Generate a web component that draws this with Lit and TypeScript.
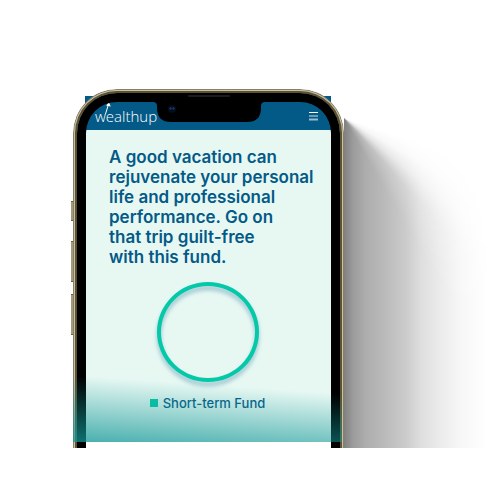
import { LitElement, html, css } from "lit";
import { customElement } from "lit/decorators.js";

@customElement("app-root")
export class AppRoot extends LitElement {
  static styles = css`
    :host {
      display: block;
      min-height: 100vh;
      background: #fff;
      color: #045a87;
      font-family: Inter, "Open Sans", sans-serif;
    }
    .scene {
      display: grid;
      grid-template-columns: 73fr 271fr 154fr;
      padding-top: 89px;
    }
    .phone {
      grid-column: 2;
      position: relative;
      padding: 7px 13px 6px 12px;
    }
    .bar {
      display: flex;
      align-items: center;
      justify-content: space-between;
      height: 34px;
      box-sizing: border-box;
      padding: 6px 13px 0 10px;
      background: #045a87;
    }
    .logo {
      display: block;
      color: #fff;
      text-decoration: none;
      font: 300 15px/20px "Open Sans", sans-serif;
      position: relative;
    }
    .arrow {
      position: absolute;
      left: 9px;
      top: -4px;
      width: 8px;
      height: 12px;
    }
    .menu {
      display: flex;
      padding: 0;
      border: 0;
      background: none;
    }
    .content {
      display: flex;
      flex-direction: column;
      align-items: center;
      margin-left: 1px;
      height: 312px;
      box-sizing: border-box;
      padding: 17px 2px 0 0;
      background: #e7f8f3;
    }
    h1 {
      align-self: stretch;
      margin: 0 0 15px;
      padding-left: 23px;
      font-size: 17px;
      line-height: 20px;
      font-weight: 600;
      white-space: nowrap;
    }
    .ring {
      width: 102px;
      height: 100px;
      box-sizing: border-box;
      border: 4px solid #04c9a8;
      border-radius: 50%;
      filter: drop-shadow(0 4px 2px rgba(4, 90, 135, 0.35));
    }
    .legend {
      display: flex;
      align-items: center;
      gap: 5px;
      margin: 11px 0 0;
      font-size: 13px;
      line-height: 20px;
      font-weight: 500;
    }
    .swatch {
      width: 8px;
      height: 8px;
      background: #04c9a8;
    }
    .case {
      position: absolute;
      inset: 0;
      overflow: hidden;
      pointer-events: none;
      border-radius: 44px 44px 0 0;
    }
    .bezel {
      position: absolute;
      inset: 4px 4px 0;
      border: 9px solid #000;
      border-bottom: 0;
      border-radius: 40px 40px 0 0;
      box-shadow: 0 0 0 2px #5d5232, 0 0 0 3px #c9c1a6, 0 0 0 4px #878069;
    }
    .notch {
      position: absolute;
      top: 0;
      left: 50%;
      width: 112px;
      height: 34px;
      margin-left: -56px;
    }
    .key {
      position: absolute;
      width: 2px;
      box-sizing: border-box;
      border: 1px solid #6b6044;
      border-width: 1px 0;
      background: #a39a7d;
    }
    .left {
      right: 100%;
    }
    .right {
      left: 100%;
    }
    .mute {
      top: 112px;
      height: 20px;
    }
    .up {
      top: 152px;
      height: 41px;
    }
    .down {
      top: 205px;
      height: 41px;
    }
    .power {
      top: 167px;
      height: 63px;
    }
    .tint {
      position: absolute;
      left: 0;
      right: 2px;
      bottom: 6px;
      height: 65px;
      pointer-events: none;
      background: linear-gradient(184deg, rgba(19, 151, 151, 0) 20%, rgba(19, 151, 151, 0.75) 100%);
    }
    .shade {
      grid-column: 3;
      margin-top: 29px;
      background: linear-gradient(
        90deg,
        #808080,
        #9c9c9c 6%,
        #adadad 14%,
        #bbb 27%,
        #cbcbcb 40%,
        #dedede 50%,
        #ebebeb 62%,
        #f7f7f7 76%,
        #fff 93%
      );
      mask-image: conic-gradient(
        from 0deg at 0 0,
        transparent 108deg,
        rgba(0, 0, 0, 0.1) 120deg,
        rgba(0, 0, 0, 0.35) 129deg,
        rgba(0, 0, 0, 0.8) 138deg,
        #000 150deg
      );
    }
  `;

  render() {
    return html`
      <main class="scene">
        <section class="phone">
          <header class="bar">
            <a class="logo" href="#">
              wealthup
              <svg class="arrow" viewBox="0 0 8 12" aria-hidden="true">
                <path d="M1.5 12 4.3 3" stroke="#fff" fill="none" />
                <path d="M4.8 0 6.8 4.6 2.2 3.8Z" fill="#fff" />
              </svg>
            </a>
            <button class="menu" aria-label="Menu">
              <svg width="9" height="9" viewBox="0 0 9 9">
                <path d="M0 .5H9" stroke="#fff" />
                <path d="M0 4H9" stroke="#fff" stroke-opacity=".8" />
                <path d="M0 7.5H9" stroke="#fff" stroke-opacity=".6" stroke-width="2" />
              </svg>
            </button>
          </header>
          <div class="content">
            <h1>
              A good vacation can<br />rejuvenate your personal<br />life and professional<br />performance.
              Go on<br />that trip guilt-free<br />with this fund.
            </h1>
            <div class="ring"></div>
            <p class="legend"><span class="swatch"></span>Short-term Fund</p>
          </div>
          <div class="case">
            <div class="bezel"></div>
            <svg class="notch" viewBox="0 0 112 34" aria-hidden="true">
              <path d="M0 12.5H112V13Q108 13 108 17V19Q108 33 94 33H18Q4 33 4 19V17Q4 13 0 13Z" />
              <rect x="35" y="6" width="42" height="2" rx="1" fill="#1c1c1c" />
              <circle cx="19" cy="20" r="4" fill="#070b14" />
              <circle cx="17.5" cy="19.5" r="1.2" fill="#0c3a78" />
              <circle cx="20.5" cy="19.5" r="1.2" fill="#0c3a78" />
            </svg>
          </div>
          <span class="key left mute"></span>
          <span class="key left up"></span>
          <span class="key left down"></span>
          <span class="key right power"></span>
          <div class="tint"></div>
        </section>
        <div class="shade"></div>
      </main>
    `;
  }
}
